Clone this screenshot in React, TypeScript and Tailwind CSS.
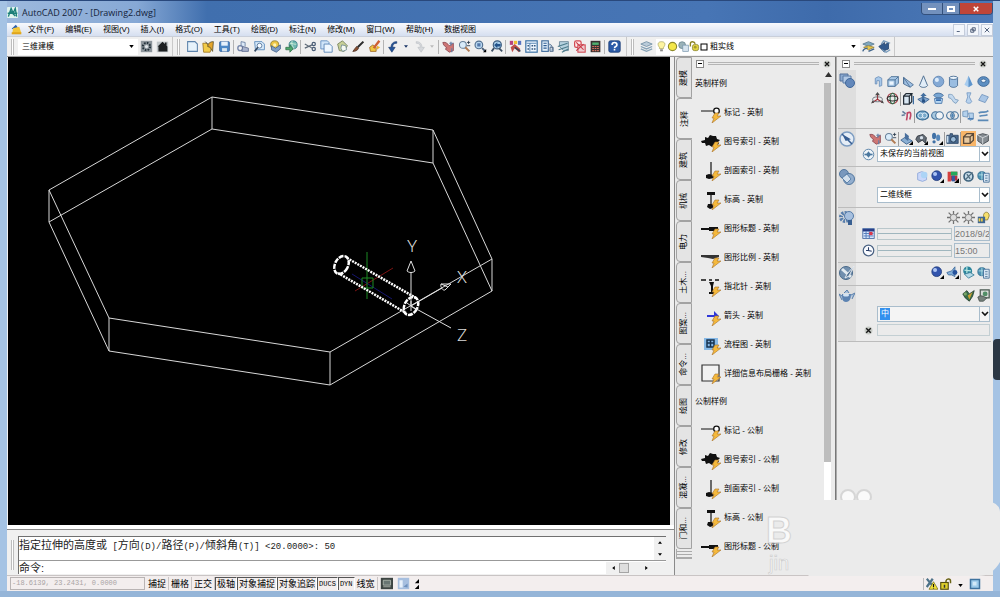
import React from 'react';

const mono = "font-['Liberation_Mono','Noto_Sans_CJK_SC',monospace]";

// small 16x16 drawings used by the toolbars and the dashboard
const icons: Record<string, React.ReactNode> = {
  app: <><rect width="16" height="16" rx="1" fill="#dff3ee" /><path d="M2 14L6 2l3 7 3-7 2 12M1 9h14M4 5l8 8" stroke="#1c7f79" strokeWidth="2" fill="none" /></>,
  doc: <><path d="M1 7l6-6 3 4-3 4z" fill="#2b5fae" /><path d="M3 6l9-2 3 9H2z" fill="#f3c63a" /><path d="M1 12h14v3H1z" fill="#e0a51c" /></>,
  gear: <><rect x="1" y="1" width="14" height="14" fill="#8e969c" /><circle cx="8" cy="8" r="4.5" fill="none" stroke="#24323b" strokeWidth="2.5" strokeDasharray="2 1.5" /><circle cx="8" cy="8" r="2" fill="#dfe5e8" /></>,
  home: <><rect x="1" y="2" width="14" height="13" fill="#c0c5c8" /><path d="M2 8l6-6 3 3V3h2v4l1 1v6H3V8z" fill="#1d2022" /></>,
  new: <path d="M2 2h9l3 3v9H2z" fill="#e6f2fb" stroke="#5d83ab" strokeWidth="1.3" />,
  open: <><path d="M1 4h5l1 2h6l-3 9H2z" fill="#f2cb49" stroke="#9b7420" /><path d="M7 8c0-4 3-6 7-6l-1 12-3-5z" fill="#e5a52a" stroke="#5a502c" /><path d="M4 2l3 3" stroke="#333" /></>,
  save: <><rect x="2" y="2" width="12" height="12" rx="1" fill="#4c88c7" stroke="#345f97" /><rect x="4" y="2" width="8" height="5" fill="#e5f0fb" /><rect x="5" y="10" width="6" height="4" fill="#d8e5f0" /></>,
  plot: <><path d="M5 8V2l5 1v5" fill="#dce9f7" stroke="#60789b" /><circle cx="4" cy="10" r="3" fill="none" stroke="#7384a8" strokeWidth="1.6" /><path d="M7 8l7 2v4H6z" fill="#a9b3cd" stroke="#5c6a8d" /></>,
  preview: <><path d="M2 2h9l3 3v7H3z" fill="#d8eafa" stroke="#4e80b5" /><circle cx="8" cy="7" r="3" fill="#f8fcff" stroke="#48698f" /><path d="M6 9l-4 5" stroke="#354a63" strokeWidth="2" /></>,
  publish: <><circle cx="7" cy="6" r="5" fill="#eec745" stroke="#8b7a34" /><path d="M3 7l5 3 6-4v5l-5 4-6-3z" fill="#7d9dc4" stroke="#45618a" /><circle cx="7" cy="6" r="2" fill="#fff4b6" /></>,
  globe: <><circle cx="10" cy="6" r="5" fill="#6eb8b1" stroke="#387d86" /><path d="M6 4c4 0 6 2 8 1M9 1c-2 4 1 7 2 10" stroke="#d8f1dd" fill="none" /><path d="M1 9h5V6l4 5-4 4v-3H1z" fill="#4caa6c" stroke="#38714d" /></>,
  cut: <><path d="M1 5l9 5M1 10l9-4" stroke="#5c6876" strokeWidth="1.4" /><circle cx="12" cy="5" r="2" fill="none" stroke="#4a5d76" strokeWidth="1.5" /><circle cx="12" cy="11" r="2" fill="none" stroke="#4a5d76" strokeWidth="1.5" /></>,
  copy: <><path d="M1 1h8l2 2v8H1z" fill="#cfe4f8" stroke="#5888bc" /><path d="M5 5h7l3 3v7H5z" fill="#eef7ff" stroke="#4d7baf" /></>,
  paste: <><path d="M2 5l6-4 6 6-4 7-6-1z" fill="#c8d097" stroke="#717e58" /><path d="M7 6l5 1 1 5-5 2-2-4z" fill="#f6faf2" stroke="#6b8791" /></>,
  brush: <><path d="M14 2L7 9" stroke="#2b2b2b" strokeWidth="2.5" /><path d="M1 14c3 0 6-1 7-4L6 8c-2 1-3 4-5 6z" fill="#8a5030" stroke="#4b3024" /></>,
  block: <><path d="M2 9l4-3 4 3v5H3z" fill="#efc742" stroke="#9b6423" /><path d="M14 1l-7 9" stroke="#ce5f32" strokeWidth="3" /><path d="M11 7l4 2-4 3z" fill="#eeb431" /></>,
  undo: <path d="M12 2C7 2 5 5 5 9H2l4 6 4-6H7c0-3 1-5 5-5z" fill="#24549a" stroke="#18376b" strokeWidth="0.800" />,
  redo: <path d="M4 2c5 0 7 3 7 7h3l-4 6-4-6h3c0-3-1-5-5-5z" fill="#d5d8dc" stroke="#bdc0c4" strokeWidth="0.800" />,
  pan: <><path d="M1 3c4-1 6 2 8 4l5-3v9l-5 2-5-4 2-1-4-4z" fill="#ce7674" stroke="#8b4850" /><path d="M11 2v5M9 4h5M12 10v5" stroke="#637fa6" strokeWidth="1.4" /></>,
  zoom: <><circle cx="6" cy="6" r="4.2" fill="#d9ecfa" stroke="#667f99" strokeWidth="1.3" /><path d="M9 9l5 5" stroke="#b07a52" strokeWidth="2.4" /><path d="M11 3h4M13 1v4M11 7h4" stroke="#26374a" /></>,
  zoomwin: <><circle cx="6" cy="6" r="4.7" fill="#b9d7f0" stroke="#526f8f" strokeWidth="1.4" /><rect x="4" y="4" width="4" height="4" fill="#5478a9" /><path d="M10 10l4 4" stroke="#4c6079" strokeWidth="2.4" /><path d="M15 11v4h-4z" /></>,
  zoomprev: <><circle cx="9" cy="6" r="5" fill="#a8cde9" stroke="#3f5d7e" strokeWidth="1.4" /><path d="M5 6l4-3v2h4v3H9v2z" fill="#24548b" /><path d="M11 10l4 4M5 10l-3 4" stroke="#3e5064" strokeWidth="2.2" /></>,
  props: <><rect x="1" y="1" width="4" height="5" fill="#b5427e" /><rect x="6" y="1" width="4" height="4" fill="#f0bf35" /><rect x="11" y="1" width="4" height="5" fill="#5773c1" /><path d="M2 9l5-4 7 6-2 4-5-5-3 5z" fill="#bf504a" /><path d="M7 9l7 5" stroke="#374256" strokeWidth="2" /></>,
  design: <><rect x="1" y="1" width="14" height="14" fill="#eff7ff" stroke="#3f74a5" strokeWidth="1.5" /><path d="M2 4h12M6 4v10" stroke="#3f74a5" /><path d="M8 7h2M11 7h2M8 11h2M11 11h2M3 7h2M3 11h2" stroke="#34597f" strokeWidth="2" /></>,
  palettes: <><rect x="1" y="1" width="8" height="13" fill="#e3f0fb" stroke="#426c9c" strokeWidth="1.4" /><path d="M3 4h4M3 7h4M3 10h4" stroke="#2f5c93" strokeWidth="1.4" /><path d="M9 5c5 0 5 4 5 8M11 9v5h4V9z" stroke="#49617f" fill="#b7cde2" /></>,
  sheet: <><path d="M3 2h11v11H8L3 8z" fill="#b7d2df" stroke="#638092" /><path d="M1 8l12-4M2 12l12-4M6 15l8-4" stroke="#4c7b8b" strokeWidth="1.5" /></>,
  markup: <><rect x="2" y="1" width="8" height="8" rx="2" fill="#ffe8e8" stroke="#d14a52" strokeWidth="1.5" /><rect x="6" y="6" width="9" height="9" fill="#eecace" stroke="#d04852" strokeWidth="1.3" /><path d="M4 3l9 9M13 5l-9 8" stroke="#c83642" strokeWidth="1.3" /></>,
  calc: <><rect x="2" y="1" width="12" height="14" fill="#383230" /><rect x="4" y="3" width="8" height="3" fill="#4fb06e" /><path d="M4 8h8M4 10.500h8M4 13h8" stroke="#d9745f" strokeWidth="1.4" strokeDasharray="2 1" /></>,
  help: <><rect x="1" y="1" width="14" height="14" rx="2" fill="#2d5ca8" stroke="#173a73" /><path d="M5 6c0-4 6-4 6 0 0 2-3 2-3 4M8 11v2" fill="none" stroke="#fff" strokeWidth="2" /></>,
  layers: <><path d="M1 5l7-3 7 3-7 3z" fill="#b9cbd9" stroke="#6e8ba1" /><path d="M1 8l7 3 7-3M1 11l7 3 7-3" fill="none" stroke="#87a3b7" strokeWidth="1.6" /></>,
  bulb: <><path d="M8 1c6 0 6 5 3 8v2H5V9C2 6 2 1 8 1z" fill="#fdf4a2" stroke="#a5a05a" /><path d="M6 12h4v3H6z" fill="#8c8c8c" /></>,
  sun: <><circle cx="8" cy="8" r="6" fill="#f4e74a" stroke="#8f8a2c" strokeWidth="1.6" /></>,
  freeze: <><circle cx="6" cy="6" r="5" fill="#9ab2b8" stroke="#5f7c87" /><rect x="7" y="6" width="8" height="9" fill="#d7e4ee" stroke="#7392aa" /></>,
  lock: <><path d="M2 8V4c0-4 6-4 7 0" fill="none" stroke="#8c8424" strokeWidth="2" /><rect x="5" y="5" width="9" height="9" rx="3" fill="#e1d443" stroke="#7c7824" /><circle cx="9" cy="9" r="2" fill="#a69b2a" /></>,
  square: <rect x="2" y="2" width="12" height="12" fill="#fff" stroke="#000" strokeWidth="2" />,
  makecur: <><path d="M1 5l7-3 7 3-7 3z" fill="#7fa6bd" stroke="#56788f" /><path d="M2 9l6-2 7 2-7 3z" fill="#e9c94d" stroke="#9b8131" /><path d="M1 14c1-3 3-4 6-4M8 14l7-3" stroke="#41668c" strokeWidth="1.8" fill="none" /></>,
  layerprev: <><path d="M1 8l7-5v3l5-3v8l-5 2v2z" fill="#325a8d" stroke="#24446d" /><path d="M5 12l5 3 5-3M4 5l3-4 8 3" stroke="#789bbb" strokeWidth="1.6" fill="none" /></>,
  polysolid: <path d="M4 4l4-2 4 2v9l-3 1V7H6v4H4z" fill="#a9c9ea" stroke="#678db7" />,
  box: <><path d="M1 6l4-4h9v8l-4 4H1z" fill="#a9c8e6" stroke="#3f668e" /><path d="M1 6h9v8M10 6l4-4" fill="none" stroke="#3f668e" /><rect x="3" y="8" width="5" height="4" fill="#edf6fe" /></>,
  wedge: <><path d="M2 3l12 9-4 3-8-4z" fill="#9fc0e3" stroke="#46698f" /><path d="M2 11V3l8 12" fill="none" stroke="#46698f" /></>,
  cone: <path d="M8 1L3 13c2 3 8 3 10 0z" fill="#e1edf8" stroke="#4f6f91" strokeWidth="1.2" />,
  sphere: <><circle cx="8" cy="8" r="6.500" fill="#84a9d5" stroke="#587fae" /><circle cx="6" cy="6" r="2.500" fill="#dcebfa" /></>,
  cylinder: <><path d="M3 3v10c2 3 8 3 10 0V3z" fill="#9abde1" stroke="#3e648d" /><ellipse cx="8" cy="3.500" rx="5" ry="2" fill="#ecf5fd" stroke="#3e648d" /></>,
  pyramid: <><path d="M8 1L3 12l5 3 5-3z" fill="#a7ccef" /><path d="M8 1v14l5-3z" fill="#5e94cb" /></>,
  torus: <><ellipse cx="8" cy="8" rx="7" ry="6" fill="#5d8fc2" stroke="#345f90" /><ellipse cx="8" cy="7" rx="3" ry="2" fill="#f0f6fb" stroke="#345f90" /></>,
  move3d: <><path d="M8 2v7M8 9l-6 4M8 9l6 4" stroke="#a12d35" strokeWidth="1.4" /><path d="M8 0L5 4h6zM0 14l2-4 2 3zM16 14l-2-4-2 3z" fill="#4a4a4a" /><ellipse cx="8" cy="9" rx="6" ry="3" fill="none" stroke="#56646c" /></>,
  rotate3d: <><circle cx="8" cy="8" r="6.500" fill="none" stroke="#a83c46" strokeWidth="1.3" /><ellipse cx="8" cy="8" rx="3" ry="6.500" fill="none" stroke="#2d6d4a" strokeWidth="1.3" /><ellipse cx="8" cy="8" rx="6.500" ry="3" fill="none" stroke="#333" strokeWidth="1.3" /></>,
  extrude: <><path d="M2 5h7v10H2zM2 5l3-3h7l-3 3M12 2v10l-3 3" fill="#d9e7f3" stroke="#202a34" strokeWidth="1.5" /><path d="M14 5v10" stroke="#34669d" strokeWidth="1.4" /></>,
  presspull: <><path d="M1 9l7-3 7 3-7 5z" fill="#83a7cf" stroke="#355c8a" /><path d="M8 1l4 4H9v5H6V5H4z" fill="#446f9f" /><circle cx="8" cy="11" r="2" fill="#244e83" /></>,
  sweep: <><path d="M2 4c3-4 9-3 12 0l-3 3H5z" fill="#79a6d3" stroke="#3d6593" /><path d="M3 8h10l-1 6H4z" fill="#b7d6f2" stroke="#3d6ea5" /><path d="M5 10h6" stroke="#2b64a8" strokeWidth="2" /></>,
  loft: <path d="M2 3c6-1 6 3 8 6l4 1-3 4C6 13 7 7 2 7z" fill="#c2d8ee" stroke="#7597ba" />,
  revolve: <path d="M6 1h5L9 6l3 6c-2 3-6 2-7 0l2-6z" fill="#b7d2ee" stroke="#7398c2" />,
  plane: <path d="M6 3l8 3-4 7-8-3z" fill="#a9c6e6" stroke="#6b90bb" />,
  helix: <><path d="M3 3l4 3M2 8l4-1" stroke="#637c9c" strokeWidth="2" /><path d="M9 4c0 4 0 6-1 10M9 5c5-3 5 2 3 8" fill="none" stroke="#bf4767" strokeWidth="2" /></>,
  union: <><ellipse cx="8" cy="8" rx="7.500" ry="5.500" fill="#75a7c9" stroke="#31658f" strokeWidth="1.4" /><circle cx="5.500" cy="8" r="3" fill="none" stroke="#e5f2fb" /><circle cx="10.500" cy="8" r="3" fill="none" stroke="#e5f2fb" /></>,
  subtract: <><circle cx="5.500" cy="8" r="4.700" fill="#a9c9e0" stroke="#416f99" strokeWidth="1.3" /><circle cx="10.500" cy="8" r="4.700" fill="#f1f4f7" stroke="#416f99" strokeWidth="1.3" /></>,
  intersect: <><circle cx="5.500" cy="8" r="4.700" fill="none" stroke="#416f99" strokeWidth="1.3" /><circle cx="10.500" cy="8" r="4.700" fill="none" stroke="#416f99" strokeWidth="1.3" /><path d="M8 5c2 2 2 4 0 6-2-2-2-4 0-6z" fill="#4b82b4" /></>,
  slice: <><path d="M1 3l6-1v8l-6-1zM8 5h6v7l-4 2z" fill="#b4d1ec" stroke="#6b91b8" /><path d="M7 12h7" stroke="#4c7fb5" strokeWidth="2" /></>,
  thicken: <path d="M2 5c4-3 8 1 12-3M3 9c4-2 7 0 10-2M1 14h13" fill="none" stroke="#5b8ab7" strokeWidth="2" />,
  orbit: <><path d="M1 10l6-4 8 5-7 4z" fill="#8bb0d4" stroke="#355b86" /><path d="M6 1l5 4-1 6-4-3z" fill="#496f9d" /><path d="M16 11v5h-5z" /></>,
  swivel: <><path d="M3 5l7-2 4 4-1 7-4-4-5 3-3-4z" fill="#626b75" stroke="#292f37" /><circle cx="8" cy="7" r="2" fill="#d8e2ec" /><path d="M16 11v5h-5z" /></>,
  walk: <><ellipse cx="5" cy="5" rx="2.500" ry="4" fill="#3f70a5" /><ellipse cx="10" cy="7" rx="2.500" ry="4" fill="#5587ba" /><circle cx="5" cy="12" r="2" fill="#3f70a5" /><path d="M16 11v5h-5z" /></>,
  camera: <><path d="M1 4h4V2h3v2h7v10H1z" fill="#49698f" stroke="#2c4665" /><circle cx="9" cy="9" r="3.500" fill="#9abbd9" stroke="#182d46" /><path d="M2 5v8" stroke="#c8ddee" strokeWidth="2" /></>,
  para: <><path d="M2 6h8v8H2zM2 6l4-4h8v8l-4 4M10 6l4-4" fill="#e8c99f" stroke="#5c4a38" strokeWidth="1.600" /></>,
  persp: <><path d="M1 4l6-2 7 2v7l-7 4-6-4z" fill="#848b91" stroke="#3b4249" /><path d="M1 4l6 3 7-3M7 7v8" fill="none" stroke="#dfe4e8" /></>,
  target: <><circle cx="8" cy="8" r="6.500" fill="#eef4f9" stroke="#5d85aa" strokeWidth="1.200" /><path d="M8 4l3 4-3 4-3-4z" fill="#4b789f" /><path d="M3 8h10" stroke="#4b789f" strokeWidth="2" /></>,
  face: <><path d="M2 4l5-2 6 2v8l-5 2-6-2z" fill="#c9d7fa" stroke="#8ba5d8" /><circle cx="10" cy="6" r="4" fill="#acd4f6" /></>,
  ball: <><circle cx="7" cy="7" r="6" fill="#3254ad" stroke="#213c7a" /><circle cx="5" cy="5" r="2.500" fill="#adc5f4" /><path d="M16 11v5h-5z" /></>,
  rgb: <><path d="M2 2h12v4H6v8H2z" fill="#d4413e" /><path d="M6 2h8v5H6z" fill="#24a95a" /><path d="M6 7h8v6H6z" fill="#b62f3e" /><path d="M7 7h4v7H7z" fill="#3757a1" /><path d="M16 10v6h-6z" /></>,
  edge: <><circle cx="8" cy="8" r="5.500" fill="#c4dae8" stroke="#3d627d" strokeWidth="2" /><path d="M4 12L13 3M6 5l4 6" stroke="#506d7f" strokeWidth="1.500" /></>,
  panel: <><circle cx="6" cy="7" r="5" fill="#4d94b5" stroke="#27668a" /><path d="M2 6h8M6 2v10" stroke="#bde2e7" /><path d="M8 4h7v11H8z" fill="#d8e6f3" stroke="#3d6894" /><path d="M10 7h3M10 10h3M10 13h3" stroke="#426c91" /></>,
  lightgray: <><path d="M8 0v16M0 8h16M2 2l12 12M14 2L2 14" stroke="#727272" strokeWidth="1.600" /><circle cx="8" cy="8" r="4" fill="#ddd" stroke="#777" /></>,
  sunlock: <><path d="M8 6c0-6 7-6 7 0l-2 5H9z" fill="#f7df6b" stroke="#8a7b34" /><rect x="1" y="7" width="9" height="8" fill="#3f6691" /><path d="M3 9v4M6 9v4" stroke="#efcf48" strokeWidth="2" /></>,
  calendar: <><rect x="1" y="2" width="14" height="12" fill="#dceaff" stroke="#395f9d" /><path d="M1 4h14" stroke="#263b85" strokeWidth="3" /><path d="M2 8h12M2 11h12M5 5v9M9 5v9" stroke="#557dbc" strokeWidth="1.200" /><path d="M9 6h4v4H9z" fill="#dc3749" /></>,
  clock: <><circle cx="8" cy="8" r="6.500" fill="#f9fbff" stroke="#496182" strokeWidth="1.500" /><path d="M8 4v4l4 1M8 8H5" fill="none" stroke="#263b65" strokeWidth="1.300" /></>,
  speaker: <><path d="M1 8l6-2 4-5v12L7 11H3z" fill="#82aed8" stroke="#3c699a" /><circle cx="11" cy="8" r="3" fill="#28549c" /><path d="M16 11v5h-5z" /></>,
  matlayers: <><circle cx="7" cy="6" r="5.500" fill="#2b849b" /><path d="M3 5l8 1M6 1v9" stroke="#bae8e2" strokeWidth="1.500" /><path d="M3 10l7-2 5 3-7 4z" fill="#b4d9e7" stroke="#357a95" /></>,
  render: <><path d="M1 6l5-4 3 4 6-4-2 7-4 6-5-4z" fill="#386e49" stroke="#223b2b" /><path d="M7 8l6-4-4 9z" fill="#cba134" /><circle cx="4" cy="6" r="2" fill="#78a568" /></>,
  renderwin: <><path d="M4 1h11v10H4z" fill="#d8ddd9" stroke="#495851" strokeWidth="1.500" /><circle cx="10" cy="6" r="3" fill="#528e67" /><path d="M1 10c5-4 9 1 11 1l-4 4H3z" fill="#77827d" stroke="#46504b" /></>,
  modeling: <><path d="M1 2h8v7H1z" fill="#8ba9cf" stroke="#526f97" /><path d="M4 4h8v7H4z" fill="#b2c9e5" stroke="#587ba6" /><circle cx="11" cy="11" r="4.500" fill="#6388bb" stroke="#41689a" /></>,
  compass: <><circle cx="8" cy="8" r="7" fill="#e5edf6" stroke="#7d9dc2" strokeWidth="1.500" /><path d="M3 3l10 10M7 9L5 5l5 3z" stroke="#365d92" strokeWidth="1.600" fill="#587eb3" /></>,
  style: <><circle cx="5" cy="5" r="4.500" fill="#7998bd" stroke="#52779f" /><circle cx="10" cy="10" r="5.500" fill="#93aece" stroke="#52779f" /><path d="M3 9l5-4 4 5-4 4z" fill="#d3e0ed" stroke="#6186ad" /></>,
  light: <><circle cx="6" cy="7" r="4" fill="none" stroke="#587eac" strokeWidth="4" strokeDasharray="2 1" /><circle cx="10" cy="6" r="4.500" fill="#a7c0df" stroke="#557ba8" /><path d="M9 10h4v5H9z" fill="#385f91" /></>,
  material: <><circle cx="7" cy="8" r="6.500" fill="#718fae" stroke="#496989" /><path d="M3 4l9 8" stroke="#e2eaf0" strokeWidth="3" /><path d="M15 1L8 9l-2 4 4-2z" fill="#527293" stroke="#e3e9ef" /></>,
  teapot: <><path d="M3 6h9c0 4-1 8-5 8S3 10 3 6z" fill="#5c83b2" /><path d="M5 5l3-3 2 3M12 7l4-2-3 6M3 8L0 6l3 6" fill="#a9c1dc" stroke="#5b7fa9" /><ellipse cx="7" cy="7" rx="3" ry="1.500" fill="#d4e3f2" /></>,
  xmark: <><circle cx="8" cy="8" r="7" fill="#c6cac5" /><path d="M4 4l8 8M12 4l-8 8" stroke="#151515" strokeWidth="2.500" /></>,
  warn: <><path d="M1 1l10 12M9 1L1 12" stroke="#4d7288" strokeWidth="3" /><path d="M10 5l6 10H4z" fill="#f3e337" stroke="#77701f" /><path d="M10 8v4M10 13v1" stroke="#111" strokeWidth="1.500" /></>,
  unlock: <><path d="M8 8V4c1-4 6-3 6 0v3" fill="none" stroke="#6b6518" strokeWidth="2" /><rect x="1" y="6" width="10" height="9" fill="#e0d02c" stroke="#554e10" strokeWidth="1.500" /><path d="M6 9v4" stroke="#333" strokeWidth="2" /></>,
  clean: <><rect x="1" y="1" width="14" height="14" fill="#3f739f" /><rect x="3" y="3" width="10" height="10" fill="#9ccaea" /><rect x="5" y="5" width="5" height="5" fill="#d2e9f8" /></>,
  modelBtn: <><rect x="1" y="1" width="15" height="14" fill="#3d4543" /><path d="M4 4h9v6H4zM4 12h9" stroke="#b6beb5" fill="#687572" /></>,
  layoutBtn: <><rect x="1" y="1" width="14" height="14" fill="#a7bfdf" /><path d="M3 13V4h4v9z" fill="#e8f1fb" /><path d="M8 12l5-4v5z" fill="#6f91bd" /></>,
};

const Icon = ({ name, className = 'size-[13px]' }: { name: string; className?: string }) => (
  <svg viewBox="0 0 16 16" className={`${className} shrink-0`} aria-hidden="true">{icons[name]}</svg>
);

const IconButton = ({ name }: { name: string }) => (
  <button aria-label={name} className="flex h-4 w-4 shrink-0 items-center justify-center">
    <Icon name={name} />
  </button>
);

const DashButton = ({ name, active = false }: { name: string; active?: boolean }) => (
  <button aria-label={name} className={`flex h-4 w-[15px] shrink-0 items-center justify-center ${active ? 'bg-[#f8b568]' : ''}`}>
    <Icon name={name} />
  </button>
);

const Sep = () => <span className="mx-px h-3.5 w-px shrink-0 bg-[#b4b4b4]" />;
const Grip = () => <span className="mx-1 h-4 w-[3px] shrink-0 border-x border-[#bdbdbd] bg-white" />;
const Down = () => (
  <svg viewBox="0 0 6 4" className="pointer-events-none mr-1 h-[3px] w-[5px] shrink-0"><path d="M0 0h6L3 4z" /></svg>
);

const menus = ['文件(F)', '编辑(E)', '视图(V)', '插入(I)', '格式(O)', '工具(T)', '绘图(D)', '标注(N)', '修改(M)', '窗口(W)', '帮助(H)', '数据视图'];
const toolGroups = [
  ['new', 'open', 'save'],
  ['plot', 'preview', 'publish', 'globe'],
  ['cut', 'copy', 'paste', 'brush', 'block'],
];
const toolGroups2 = [
  ['pan', 'zoom', 'zoomwin', 'zoomprev'],
  ['props', 'design', 'palettes', 'sheet', 'markup', 'calc'],
];

const TitleBar = () => (
  <header className="flex h-[22px] shrink-0 items-start bg-[linear-gradient(90deg,#9db9dd_0px,#86a8d5_130px,#406fae_200px,#4775b5_700px,#3e6bab_820px,#4c79b7_100%)]">
    <Icon name="app" className="mt-1.5 size-[11px]" />
    <h1 className="ml-1 mt-1 flex-1 font-['Open_Sans',sans-serif] text-[9px] leading-4 text-[#14233a]">AutoCAD 2007 - [Drawing2.dwg]</h1>
    <div className="mt-0.5 flex h-3 overflow-hidden rounded-b border border-t-0 border-[#33507c] text-white">
      <button aria-label="最小化" className="flex w-5 items-center justify-center bg-[#7391bd]"><span className="h-0.5 w-2 bg-white" /></button>
      <button aria-label="还原" className="flex w-[18px] items-center justify-center border-x border-[#33507c] bg-[#7391bd]"><span className="h-1.5 w-2 border-2 border-white" /></button>
      <button aria-label="关闭" className="flex w-8 items-center justify-center bg-[#bf4538]">
        <svg viewBox="0 0 8 8" className="size-1.5"><path d="M1 1l6 6M7 1L1 7" stroke="#fff" strokeWidth="2" /></svg>
      </button>
    </div>
  </header>
);

const MenuBar = () => (
  <nav className="flex h-3.5 shrink-0 items-center border-b border-[#c9cfda] bg-[linear-gradient(180deg,#f7f9fd,#d6dff0)] pl-1">
    <Icon name="doc" className="mr-1.5 size-[11px]" />
    <div className="flex flex-1 gap-[11px]">
      {menus.map((m) => (
        <button key={m} className="whitespace-nowrap leading-3">{m}</button>
      ))}
    </div>
    <div className="flex gap-0.5 text-[#52627c]">
      {['M1 6h4', 'M3 1h4v4H3zM1 3h4v4H1z', 'M1 1l6 6M7 1L1 7'].map((d) => (
        <button key={d} aria-label="窗口" className="flex h-3 w-3 items-center justify-center border border-[#c5cddb] bg-[#f3f6fb]">
          <svg viewBox="0 0 8 8" className="size-1.5"><path d={d} fill="none" stroke="#52627c" strokeWidth="1.300" /></svg>
        </button>
      ))}
    </div>
  </nav>
);

const Toolbar = () => (
  <div className="flex h-5 shrink-0 items-center border-b border-[#9a9a9a] bg-[#f0f0f0]">
    <Grip />
    <label className="flex h-4 w-[120px] items-center bg-white">
      <select aria-label="工作空间" className="min-w-0 flex-1 appearance-none bg-transparent pl-1 outline-none">
        <option>三维建模</option>
      </select>
      <Down />
    </label>
    <IconButton name="gear" />
    <IconButton name="home" />
    <span className="ml-0.5 h-[19px] w-px bg-[#c9c9c9]" />
    <Grip />
    {toolGroups.map((group) => (
      <React.Fragment key={group[0]}>
        {group.map((n) => <IconButton key={n} name={n} />)}
        <Sep />
      </React.Fragment>
    ))}
    <IconButton name="undo" />
    <button aria-label="放弃列表" className="flex w-2.5 justify-center"><svg viewBox="0 0 6 4" className="h-[3px] w-1"><path d="M0 0h6L3 4z" fill="#1a3566" /></svg></button>
    <IconButton name="redo" />
    <button aria-label="重做列表" className="flex w-2.5 justify-center"><svg viewBox="0 0 6 4" className="h-[3px] w-1"><path d="M0 0h6L3 4z" fill="#bbb" /></svg></button>
    <Sep />
    {toolGroups2.map((group) => (
      <React.Fragment key={group[0]}>
        {group.map((n) => <IconButton key={n} name={n} />)}
        <Sep />
      </React.Fragment>
    ))}
    <IconButton name="help" />
    <span className="ml-1 h-[19px] w-px bg-[#c9c9c9]" />
    <Grip />
    <IconButton name="layers" />
    <label className="ml-0.5 flex h-4 w-[204px] items-center bg-white">
      {['bulb', 'sun', 'freeze', 'lock'].map((n) => <Icon key={n} name={n} className="size-[11px]" />)}
      <Icon name="square" className="size-2" />
      <select aria-label="图层" className="min-w-0 flex-1 appearance-none bg-transparent pl-0.5 outline-none">
        <option>粗实线</option>
      </select>
      <Down />
    </label>
    <IconButton name="makecur" />
    <IconButton name="layerprev" />
    <span className="ml-0.5 h-[19px] w-px bg-[#c9c9c9]" />
  </div>
);

const Drawing = () => (
  <div className="min-h-0 flex-1 overflow-hidden bg-black">
    <svg viewBox="8 57 662 468" preserveAspectRatio="xMinYMin meet" className="size-full">
      <g fill="none" stroke="#d8d8d8">
        <path d="M212 97L433 130L492 259L330 352L109 318L49 190Z" />
        <path d="M212 129L433 163L492 291L330 385L109 351L49 222Z" />
        <path d="M212 97v32M433 130v33M492 259v32M330 352v33M109 318v33M49 190v32" />
      </g>
      {/* crosshair */}
      <path d="M355 291L393 268" stroke="#7c1414" />
      <path d="M352 274L392 299" stroke="#15156e" />
      <path d="M367 252v47M362 278h11v10h-11z" stroke="#1c8a24" fill="none" />
      {/* tube */}
      <g fill="none" stroke="#fff">
        <path d="M347 258L416 298M338 273L406 313" strokeWidth="2.500" strokeDasharray="2 1" />
        <ellipse cx="341.500" cy="265" rx="6.500" ry="9.500" transform="rotate(28 341.500 265)" strokeWidth="2.500" strokeDasharray="5 1" />
        <ellipse cx="411" cy="306" rx="6.500" ry="9.500" transform="rotate(28 411 306)" strokeWidth="2.500" strokeDasharray="5 1" />
      </g>
      {/* ucs icon */}
      <g fill="none" stroke="#e0e0e0">
        <path d="M411 306V272M411 306L442 288M411 306L451 328M407 303l8 6M411 301v10" />
        <path d="M407 271L411 261L415 271C413 273 409 273 407 271ZM451 284L441 284C440 287 443 291 445 290ZM441 284l7 3" />
      </g>
      <g fill="#d8d8d8" fontFamily="Roboto, sans-serif" fontWeight="300" fontSize="17" textAnchor="middle">
        <text x="412" y="252">Y</text>
        <text x="462" y="283">X</text>
        <text x="462" y="341">Z</text>
      </g>
    </svg>
  </div>
);

const CommandLine = () => (
  <section className="shrink-0 border-t-4 border-white bg-[#f0f0f0]">
    <div className="flex border-t border-[#8a8a8a] pb-px pl-1 pr-2 pt-1.5">
      <span className="my-1 mr-1 w-[3px] border-x border-[#bdbdbd] bg-white" />
      <div className="flex-1 border-l border-t border-[#707070]">
        <div className="flex h-[23px] bg-white">
          <p className="flex-1 whitespace-pre text-[11px] leading-4 text-[#222]">
            指定拉伸的高度或<span className={`${mono} text-[9px]`}> [</span>方向<span className={`${mono} text-[9px]`}>(D)/</span>路径<span className={`${mono} text-[9px]`}>(P)/</span>倾斜角<span className={`${mono} text-[9px]`}>{'(T)] <20.0000>: 50'}</span>
          </p>
          <div className="flex w-3 flex-col items-center justify-around bg-[#f0f0f0]">
            <svg viewBox="0 0 6 4" className="h-[3px] w-1"><path d="M0 4h6L3 0z" /></svg>
            <svg viewBox="0 0 6 4" className="h-[3px] w-1"><path d="M0 0h6L3 4z" /></svg>
          </div>
        </div>
        <div className="flex h-3.5 items-center border-t border-[#999] bg-white">
          <label htmlFor="cmd" className="text-[11px] leading-3 text-[#222]">命令:</label>
          <input id="cmd" className="h-3 min-w-0 flex-1 outline-none" />
          <div className="flex h-3 w-[60px] items-center bg-[#f0f0f0] pl-1.5">
            <svg viewBox="0 0 4 6" className="mr-1 h-1 w-[3px]"><path d="M4 0v6L0 3z" /></svg>
            <span className="mr-4 size-2.5 border border-[#a5a5a5] bg-[#dedede]" />
            <svg viewBox="0 0 4 6" className="h-1 w-[3px]"><path d="M0 0v6l4-3z" /></svg>
          </div>
        </div>
      </div>
    </div>
  </section>
);

const tabs = ['建模', '注释', '建筑', '机械', '电力', '土木...', '图案...', '命令...', '绘图', '修改', '混凝...', '门和...'];

// block thumbnails of the tool palette, 20x20
const thumbs: Record<string, React.ReactNode> = {
  标记: <><path d="M0 8h13" stroke="#111" /><circle cx="15.500" cy="8" r="2.800" fill="#fff" stroke="#111" strokeWidth="1.300" /></>,
  图号索引: <path d="M0 9l4-1V5l3 1 2-3 3 1 3 0 1 3 3 1-2 2 1 2-4 1-3 2-3-2-3 1-1-3H1z" fill="#111" />,
  剖面索引: <><path d="M10 1v13" stroke="#111" strokeWidth="1.200" /><path d="M5 14l3-1 4 1 1 3-5 1-3-1z" fill="#111" /></>,
  标高: <><path d="M10 3v11" stroke="#111" strokeWidth="1.200" /><path d="M6 2h8v3H6zM7 14h5v4l-3 1-3-2z" fill="#111" /></>,
  图形标题: <path d="M0 9h8V8h9v4H8v-1H0z" fill="#111" />,
  图形比例: <path d="M0 7h18v2l-6 2-5-1-7-1z" fill="#333" />,
  指北针: <><path d="M0 3h5M8 3h3M14 3h4" stroke="#111" strokeWidth="1.400" /><path d="M8 5h5l-1 4v6h2v2H8v-2h2V9z" fill="#111" /></>,
  箭头: <path d="M6 9h7V5l5 5-5 5v-4H6z" fill="#3038d8" />,
  流程图: <><rect x="3" y="3" width="14" height="12" fill="#87b9e6" /><path d="M6 5h7v7H6zM6 8h7M9.500 5v7" fill="none" stroke="#16324f" strokeWidth="1.500" /></>,
  详细信息布局栅格: <path d="M1 1h17v16H1z" fill="#f2f2f2" stroke="#333" strokeWidth="1.200" />,
};

const imperial = Object.keys(thumbs);
const metric = imperial.slice(0, 5);

const PaletteList = ({ title, unit, items }: { title: string; unit: string; items: string[] }) => (
  <>
    <h2 className="flex h-7 items-center">{title}</h2>
    <ul>
      {items.map((item) => (
        <li key={item}>
          <button className="flex h-[29px] items-center gap-[3px] whitespace-nowrap pl-1.5">
            <svg viewBox="0 0 20 20" className="size-5 shrink-0" aria-hidden="true">
              {thumbs[item]}
              <path d="M14 10h4l-2 3h4l-9 7 2-5h-2z" fill="#f5b93c" stroke="#a8722a" strokeWidth="0.600" />
            </svg>
            {item} - {unit}
          </button>
        </li>
      ))}
    </ul>
  </>
);

const PanelCaption = () => (
  <div className="flex h-[13px] shrink-0 items-center gap-1 px-1">
    <button aria-label="最小化面板" className="flex size-2 items-center justify-center border border-[#888] bg-white"><span className="h-px w-1 bg-black" /></button>
    <span className="h-[3px] flex-1 border-y border-[#b5b5b5]" />
    <button aria-label="关闭面板"><Icon name="xmark" className="size-2" /></button>
  </div>
);

const ToolPalette = () => (
  <aside className="flex w-[162px] shrink-0 border-r border-[#777] bg-[#ebebeb]">
    <div role="tablist" className="flex w-[18px] shrink-0 flex-col border-l border-[#8a8a8a] pl-px">
      {tabs.map((t, i) => (
        <button
          key={t}
          role="tab"
          aria-selected={i === 1}
          className={`flex h-[41px] w-4 items-center justify-center rounded-l border border-[#a2a2a2] ${i === 1 ? 'border-r-0 bg-[#ebebeb]' : 'bg-[#e4e4e4]'}`}
        >
          <span className="rotate-180 [text-orientation:sideways] [writing-mode:vertical-rl]">{t}</span>
        </button>
      ))}
      <span className="h-2.5 border-b border-l border-[#aaa] bg-[repeating-linear-gradient(180deg,#ebebeb_0px,#ebebeb_2px,#aaa_2px,#aaa_3px)]" />
    </div>
    <div className="flex min-w-0 flex-1 flex-col">
      <PanelCaption />
      <div className="flex min-h-0 flex-1">
        <div className="min-w-0 flex-1 overflow-hidden pl-[3px]">
          <PaletteList title="英制样例" unit="英制" items={imperial} />
          <PaletteList title="公制样例" unit="公制" items={metric} />
        </div>
        <div className="mr-1 flex w-[7px] shrink-0 flex-col">
          <svg viewBox="0 0 7 7" className="m-px size-[7px]"><path d="M0 6h7L3.500 1z" fill="#333" /></svg>
          <span className="mt-1 h-3/4 bg-[#bdbdbd]" />
          <span className="flex-1 bg-white" />
        </div>
      </div>
    </div>
  </aside>
);

const DashRow = ({ groups, active }: { groups: string[][]; active?: string }) => (
  <div className="flex h-[17px] items-center justify-end">
    {groups.map((g, i) => (
      <React.Fragment key={i}>
        {i > 0 && <span className="h-3.5 w-px bg-[#9c9c9c]" />}
        {g.map((n, j) => <DashButton key={n + j} name={n} active={n === active} />)}
      </React.Fragment>
    ))}
  </div>
);

const DashSelect = ({ label }: { label: string }) => (
  <label className="flex h-4 min-w-0 flex-1 items-center border border-[#a9bdcc] bg-white">
    <select aria-label={label} className="min-w-0 flex-1 appearance-none bg-transparent pl-0.5 outline-none">
      <option>{label}</option>
    </select>
    <span className="flex h-full w-2.5 items-center justify-center border-l border-[#a9bdcc]">
      <svg viewBox="0 0 8 6" className="h-1.5 w-2"><path d="M1 1l3 3 3-3" fill="none" stroke="#111" strokeWidth="1.600" /></svg>
    </span>
  </label>
);

const DashSlider = ({ label }: { label: string }) => (
  <input
    type="range"
    aria-label={label}
    className="h-3 min-w-0 flex-1 appearance-none border border-[#b9c7cb] bg-[linear-gradient(180deg,transparent_4px,#9fb6be_4px,#9fb6be_5px,transparent_5px)] [&::-webkit-slider-thumb]:size-0 [&::-webkit-slider-thumb]:appearance-none"
  />
);

const DashSection = ({ icon, children }: { icon: string; children: React.ReactNode }) => (
  <section className="flex border-b border-[#bcbcbc]">
    <div className="flex w-[18px] shrink-0 justify-center bg-[#dedede] pt-0.5">
      <Icon name={icon} className="size-4" />
    </div>
    <div className="min-w-0 flex-1 pb-1 pl-1.5 pt-px">{children}</div>
  </section>
);

const Dashboard = () => (
  <aside className="w-[157px] shrink-0 border-l border-[#aaa] bg-[#ebebeb] pl-px pr-0.5">
    <PanelCaption />
    <DashSection icon="modeling">
      <div className="h-0.5" />
      <DashRow groups={[['polysolid', 'box', 'wedge', 'cone', 'sphere', 'cylinder', 'pyramid', 'torus']]} />
      <DashRow groups={[['move3d', 'rotate3d'], ['extrude', 'presspull', 'sweep', 'loft', 'revolve', 'plane']]} />
      <DashRow groups={[['helix'], ['union', 'subtract', 'intersect'], ['slice', 'thicken']]} />
    </DashSection>
    <DashSection icon="compass">
      <DashRow groups={[['pan', 'zoom'], ['orbit', 'swivel', 'walk'], ['camera'], ['para', 'persp']]} active="para" />
      <div className="-mt-px flex items-center gap-0.5 pr-px">
        <Icon name="target" />
        <DashSelect label="未保存的当前视图" />
      </div>
    </DashSection>
    <DashSection icon="style">
      <DashRow groups={[['face', 'ball', 'rgb'], ['edge', 'panel']]} />
      <div className="flex pl-[15px] pr-px pt-0.5"><DashSelect label="二维线框" /></div>
    </DashSection>
    <DashSection icon="light">
      <DashRow groups={[['lightgray', 'lightgray', 'sunlock']]} />
      <div className="flex items-center gap-0.5 pr-px">
        <Icon name="calendar" />
        <DashSlider label="日期" />
        <input aria-label="日期值" defaultValue="2018/9/21" className="h-[15px] w-9 border border-[#a9bdcc] bg-transparent text-[9px] text-[#777] outline-none" />
      </div>
      <div className="mt-0.5 flex items-center gap-0.5 pr-px">
        <Icon name="clock" />
        <DashSlider label="时间" />
        <input aria-label="时间值" defaultValue="15:00" className="h-[15px] w-9 border border-[#a9bdcc] bg-transparent text-[9px] text-[#777] outline-none" />
      </div>
    </DashSection>
    <DashSection icon="material">
      <DashRow groups={[['ball', 'speaker'], ['matlayers', 'panel']]} />
    </DashSection>
    <DashSection icon="teapot">
      <DashRow groups={[['render', 'renderwin']]} />
      <div className="flex pl-[15px] pr-px pt-0.5">
        <label className="flex h-4 min-w-0 flex-1 items-center border border-[#a9bdcc] bg-[#f4f4f4] pl-0.5">
          <select aria-label="渲染预设" className="h-3 w-[10px] appearance-none bg-[#3390ee] pl-px text-white outline-none"><option>中</option></select>
          <span className="flex-1" />
          <span className="flex h-full w-2.5 items-center justify-center border-l border-[#a9bdcc]">
            <svg viewBox="0 0 8 6" className="h-1.5 w-2"><path d="M1 1l3 3 3-3" fill="none" stroke="#111" strokeWidth="1.600" /></svg>
          </span>
        </label>
      </div>
      <div className="mb-px mt-0.5 flex items-center gap-1 pl-0.5 pr-px">
        <Icon name="xmark" className="size-[9px]" />
        <span className="h-3 flex-1 border border-[#c3cfd3]" />
      </div>
    </DashSection>
  </aside>
);

const modes: [string, boolean][] = [
  ['捕捉', false], ['栅格', false], ['正交', false], ['极轴', true], ['对象捕捉', true], ['对象追踪', true], ['DUCS', true], ['DYN', true], ['线宽', false],
];

const StatusBar = () => (
  <footer className="flex h-4 shrink-0 items-center border-t border-[#c9c4c4] bg-[#f3eeee] pl-[3px]">
    <output className={`${mono} mr-px flex h-[13px] w-[135px] items-center whitespace-pre border border-[#b9b4b4] pl-px text-[7px] text-[#a9a4a4]`}>-18.6139, 23.2431, 0.0000</output>
    {modes.map(([m, on]) => (
      <button
        key={m}
        className={`${/[A-Z]/.test(m) ? `${mono} text-[7px]` : 'text-[9px]'} flex h-[13px] items-center whitespace-nowrap border-r leading-3 ${on ? 'border-l border-t border-l-[#555] border-r-white border-t-[#555] px-px' : 'border-[#c9c4c4] px-0.5'}`}
      >
        {m}
      </button>
    ))}
    <button aria-label="模型" className="ml-0.5 mr-1"><Icon name="modelBtn" /></button>
    <button aria-label="布局" className="mr-1"><Icon name="layoutBtn" /></button>
    <svg viewBox="0 0 6 12" className="h-2.5 w-[5px]"><path d="M6 0v5H1zM6 7v5H1z" /></svg>
    <span className="flex-1" />
    <span className="mr-0.5 h-3 w-px bg-[#bbb]" />
    <button aria-label="通信中心"><Icon name="warn" className="size-3" /></button>
    <button aria-label="工具栏锁定" className="ml-0.5"><Icon name="unlock" className="size-3" /></button>
    <svg viewBox="0 0 6 4" className="mx-1.5 mt-1 h-[3px] w-[5px]"><path d="M0 0h6L3 4z" /></svg>
    <button aria-label="全屏显示" className="mr-3"><Icon name="clean" className="size-3" /></button>
  </footer>
);

const App = () => {
  return (
    <div className="relative flex h-screen min-h-[597px] flex-col overflow-hidden border-b-[6px] border-t border-b-[#95b5d8] border-t-[#29487c] bg-[#a5c3e4] px-[7px] font-['Liberation_Sans','Noto_Sans_CJK_SC',sans-serif] text-[8px] text-black">
      <TitleBar />
      <MenuBar />
      <Toolbar />
      <div className="flex min-h-0 flex-1">
        <main className="flex min-w-0 flex-1 flex-col bg-[#f0f0f0]">
          <div className="flex min-h-0 flex-1 pl-px pr-1"><Drawing /></div>
          <CommandLine />
        </main>
        <ToolPalette />
        <Dashboard />
      </div>
      <StatusBar />

      {/* side gadget docked over the frame */}
      <span className="absolute right-0 top-[338px] h-[41px] w-[7px] rounded-l bg-[#2b3744]" />

      {/* watermark */}
      <div className="pointer-events-none absolute -bottom-1.5 right-0 h-[112px] w-[240px]">
        <svg viewBox="760 485 240 112" className="size-full">
          <circle cx="848" cy="497" r="7" fill="#fafafa" stroke="#d6d6d6" strokeWidth="2" />
          <circle cx="864" cy="497" r="7" fill="#fafafa" stroke="#d6d6d6" strokeWidth="2" />
          <path d="M795 500H985Q1000 503 1000 512V562Q992 576 978 576H809Q800 567 795 566Z" fill="#ebebeb" />
          <text x="766" y="543" fontSize="36" fontWeight="700" fontFamily="Liberation Sans, sans-serif" fill="#fcfcfc" stroke="#cfcfcf" strokeWidth="1" opacity="0.850">B</text>
          <text x="769" y="570" fontSize="20" fontFamily="Liberation Sans, sans-serif" fill="#fafafa" stroke="#cfcfcf" strokeWidth="0.700">jin</text>
        </svg>
      </div>
    </div>
  );
};

export default App;
